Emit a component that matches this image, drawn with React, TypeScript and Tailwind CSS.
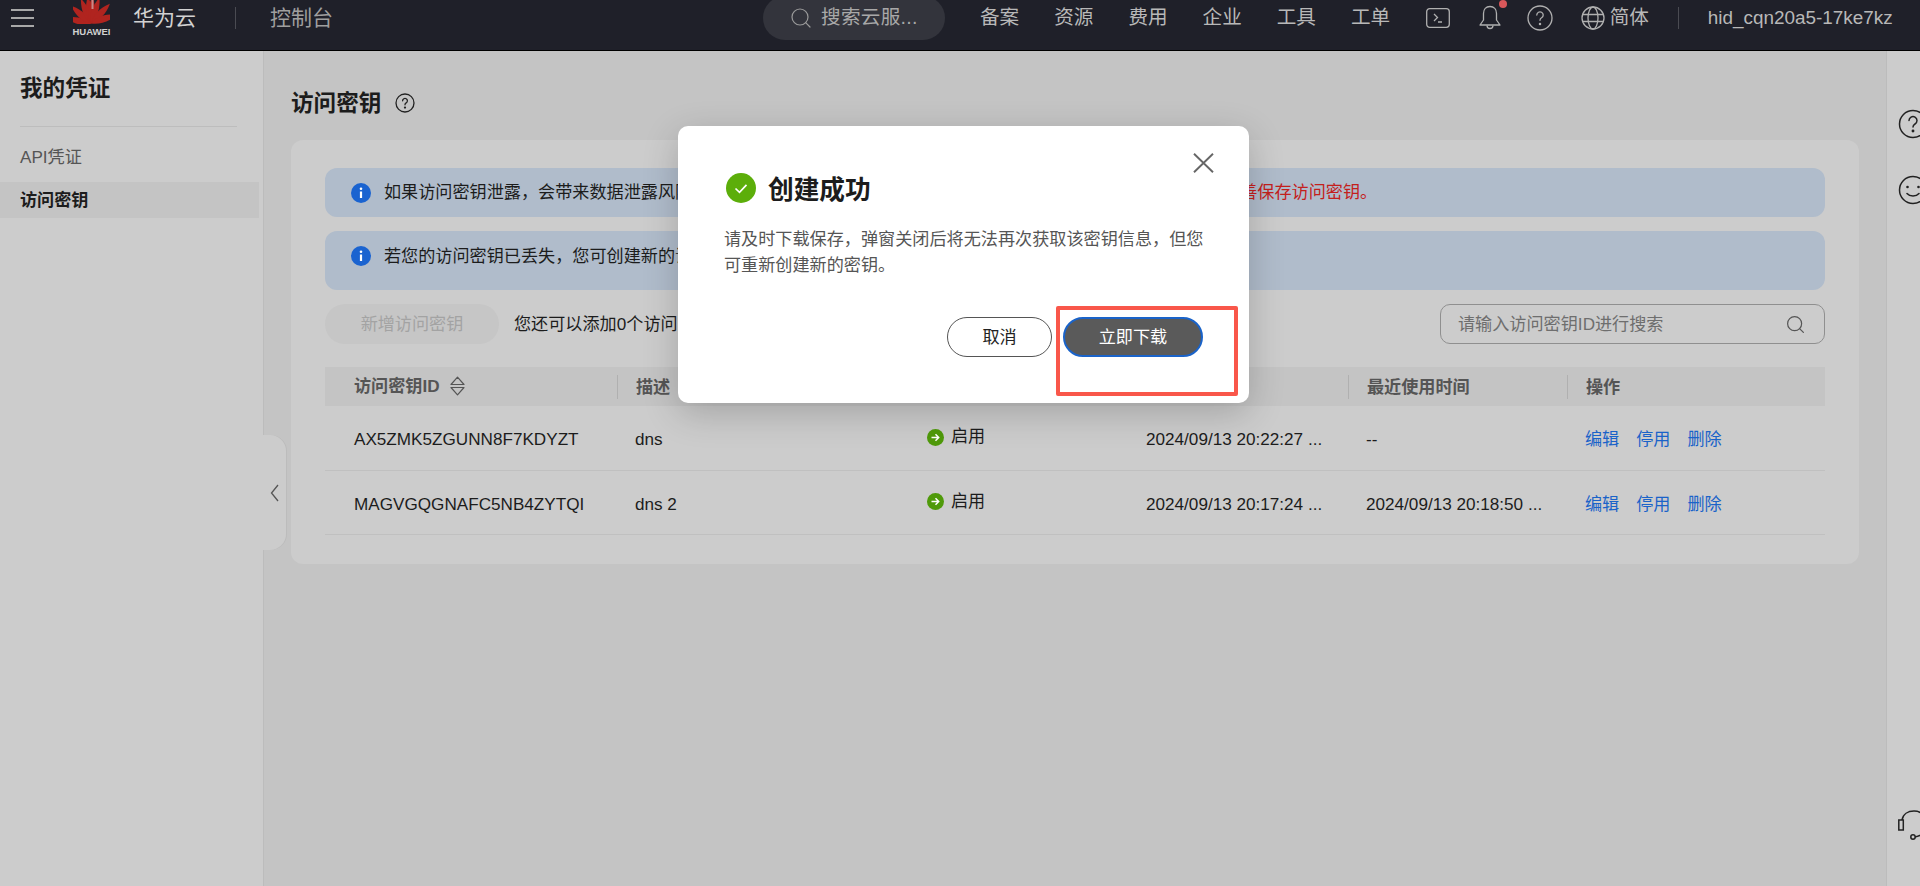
import { Search } from "lucide-react"

const rows = [
  { id: "AX5ZMK5ZGUNN8F7KDYZT", desc: "dns", created: "2024/09/13 20:22:27 ...", used: "--" },
  { id: "MAGVGQGNAFC5NB4ZYTQI", desc: "dns 2", created: "2024/09/13 20:17:24 ...", used: "2024/09/13 20:18:50 ..." },
]

const navItems = ["备案", "资源", "费用", "企业", "工具", "工单"]
const gridCols = "grid grid-cols-[292px_292px_219px_220px_219px_259px]"

export default function App() {
  return (
    <div className="relative flex h-[886px] w-[1920px] flex-col overflow-hidden bg-[#c4c4c4] font-['Liberation_Sans','Noto_Sans_CJK_SC',sans-serif]">
      <TopBar />

      <div className="flex flex-1">
        <aside className="w-[263px] shrink-0 bg-[#cccccc] pr-[4px] shadow-[1px_0_0_#bcbcbc]">
          <h2 className="mt-[20px] ml-[20px] h-[34px] pt-[1px] text-[22.6px] leading-[34px] font-semibold text-[#1c1c1c]">我的凭证</h2>
          <div className="mt-[21px] ml-[20px] w-[217px] border-t border-[#bdbdbd]" />
          <div className="mt-[11px] flex h-[36px] items-center pt-[3px] pl-[20px] text-[17.14px] text-[#555]">API凭证</div>
          <div className="mt-[8px] flex h-[36px] items-center bg-[#c4c4c4] pt-[1px] pl-[20px] text-[17.14px] font-semibold text-[#1c1c1c]">访问密钥</div>
        </aside>

        <main className="min-w-0 flex-1 pr-[28px] pl-[28px]">
          <div className="mt-[35px] mb-[20px] flex h-[34px] items-center gap-[14px]">
            <h1 className="pt-[1px] text-[22.6px] leading-[34px] font-semibold text-[#1c1c1c]">访问密钥</h1>
            <svg className="h-[20px] w-[20px]" viewBox="0 0 20 20" fill="none" stroke="#222" strokeWidth="1.3">
              <circle cx="10" cy="10" r="9" />
              <path d="M7.6 7.8a2.4 2.4 0 1 1 3.6 2.1c-.8.5-1.2 1-1.2 1.9" strokeLinecap="round" />
              <circle cx="10" cy="14.6" r=".5" fill="#222" />
            </svg>
          </div>

          <section className="rounded-[12px] bg-[#cccccc] px-[34px] pt-[28px] pb-[29px]">
            <div className="flex h-[49px] items-center rounded-[12px] bg-[#b0bccb] pl-[26px]">
              <InfoIcon />
              <p className="ml-[13px] pt-[1px] text-[17.14px] whitespace-nowrap text-[#1c1c1c]">
                如果访问密钥泄露，会带来数据泄露风险，且每个访问密钥仅能下载一次，为了账号安全性，
                <span className="text-[#c4201c]">建议您定期更换并妥善保存访问密钥。</span>
              </p>
            </div>
            <div className="mt-[14px] flex h-[59px] items-start rounded-[12px] bg-[#b0bccb] pt-[15px] pl-[26px]">
              <InfoIcon />
              <p className="ml-[13px] text-[17.14px] leading-[20px] whitespace-nowrap text-[#1c1c1c]">若您的访问密钥已丢失，您可创建新的访问密钥，并停用旧的访问密钥。</p>
            </div>

            <div className="mt-[14px] flex h-[40px] items-center">
              <button type="button" className="h-[40px] w-[174px] rounded-full bg-[#c6c6c6] pt-[1px] text-[17.14px] text-[#a3a3a3]">新增访问密钥</button>
              <span className="ml-[15px] pt-[1px] text-[17.14px] text-[#1c1c1c]">您还可以添加0个访问密钥。</span>
              <div className="ml-auto flex h-[40px] w-[385px] items-center justify-between rounded-[10px] border-[1.5px] border-[#8f8f8f] pr-[18px] pl-[17px]">
                <span className="pt-[1px] text-[17.14px] text-[#6e6e6e]">请输入访问密钥ID进行搜索</span>
                <Search className="h-[21px] w-[21px] text-[#555]" strokeWidth={1.4} />
              </div>
            </div>

            <div className={`${gridCols} mt-[23px] h-[39px] items-center bg-[#c4c4c4] text-[17.14px] font-semibold text-[#555]`}>
              <div className="flex items-center pl-[29px]">
                访问密钥ID
                <svg className="ml-[10px] h-[20px] w-[15px]" viewBox="0 0 15 20" fill="none" stroke="#555" strokeWidth="1.2">
                  <path d="M7.5 1.2 14 8.500H1zM1 11.500h13L7.500 18.800z" strokeLinejoin="round" />
                </svg>
              </div>
              <HeadCell>描述</HeadCell>
              <HeadCell>状态</HeadCell>
              <HeadCell>创建时间</HeadCell>
              <HeadCell>最近使用时间</HeadCell>
              <HeadCell>操作</HeadCell>
            </div>

            {rows.map((row) => (
              <div key={row.id} className={`${gridCols} h-[64.5px] items-center border-b-[1.5px] border-[#c0c0c0] pt-[5px] text-[17.14px] text-[#1c1c1c]`}>
                <div className="pl-[29px]">{row.id}</div>
                <div className="pl-[18px]">{row.desc}</div>
                <div className="flex items-center gap-[7px] pb-[6px] pl-[18px]">
                  <StatusIcon />
                  启用
                </div>
                <div className="pl-[18px]">{row.created}</div>
                <div className="pl-[18px]">{row.used}</div>
                <div className="flex gap-[17px] pl-[18px] text-[#1a63c9]">
                  <span>编辑</span>
                  <span>停用</span>
                  <span>删除</span>
                </div>
              </div>
            ))}
          </section>
        </main>

        <aside className="w-[33px] shrink-0 overflow-hidden bg-[#cccccc] pl-[11px] shadow-[-1px_0_0_#bcbcbc]">
          <RailIcons />
        </aside>
      </div>

      <div className="absolute top-[435px] left-[263px] flex h-[115px] w-[23px] items-center rounded-r-[16px] bg-[#cccccc] pl-[7px] shadow-[1px_0_0_#bcbcbc]">
        <svg className="h-[18px] w-[9px]" viewBox="0 0 9 18" fill="none" stroke="#555" strokeWidth="1.3">
          <path d="M8 1 1.500 9 8 17" />
        </svg>
      </div>

      <SuccessModal />
    </div>
  )
}

function TopBar() {
  return (
    <header className="flex h-[51px] shrink-0 items-center border-b border-black bg-[#1f2029] pb-[15px] text-[#b8b8b8]">
      <svg className="ml-[11px] h-[20px] w-[23px]" viewBox="0 0 23 20" stroke="#a8a8a8" strokeWidth="2.2">
        <path d="M0 2h23M0 10h23M0 18h23" />
      </svg>
      <HuaweiLogo />
      <span className="ml-[23px] text-[21px] text-[#d2d2d2]">华为云</span>
      <div className="ml-[39px] h-[22px] w-px bg-[#4a4b52]" />
      <span className="ml-[34px] text-[21px] text-[#9f9f9f]">控制台</span>

      <div className="ml-[430px] flex h-[44px] w-[182px] items-center rounded-full bg-[#33343c] pl-[26px]">
        <Search className="h-[24px] w-[24px] text-[#9a9a9a]" strokeWidth={1.2} />
        <span className="ml-[8px] pt-[1px] text-[19.6px] tracking-[0.3px] whitespace-nowrap text-[#a8a8a8]">搜索云服...</span>
      </div>

      <nav className="ml-[35px] flex gap-[35px] pt-[1px] text-[19.6px]">
        {navItems.map((item) => (
          <span key={item}>{item}</span>
        ))}
      </nav>

      <svg className="ml-[35.5px] h-[20px] w-[24px]" viewBox="0 0 24 20" fill="none" stroke="#b0b0b0" strokeWidth="1.3">
        <rect x=".7" y=".7" width="22.6" height="18.6" rx="3" />
        <path d="m8 6 3.5 3.5L8 13M12 14h4" />
      </svg>
      <div className="relative ml-[28px] h-[26px] w-[24px]">
        <svg className="h-[26px] w-[24px]" viewBox="0 0 24 26" fill="none" stroke="#b0b0b0" strokeWidth="1.3">
          <path d="M12 1.500c-4 0-6.500 3-6.500 7V15L2 20h20l-3.500-5V8.500c0-4-2.500-7-6.500-7Z" strokeLinejoin="round" />
          <path d="M9 20.500a3 3 0 0 0 6 0" />
        </svg>
        <span className="absolute -top-[5px] -right-[5px] h-[8px] w-[8px] rounded-full bg-[#d9575a]" />
      </div>
      <svg className="ml-[25px] h-[26px] w-[26px]" viewBox="0 0 26 26" fill="none" stroke="#b0b0b0" strokeWidth="1.3">
        <circle cx="13" cy="13" r="12" />
        <path d="M9.800 10a3.200 3.200 0 1 1 4.800 2.800c-1 .6-1.600 1.300-1.600 2.500" strokeLinecap="round" />
        <circle cx="13" cy="19" r=".6" fill="#b0b0b0" />
      </svg>
      <svg className="ml-[28px] h-[24px] w-[24px]" viewBox="0 0 24 24" fill="none" stroke="#b0b0b0" strokeWidth="1.3">
        <circle cx="12" cy="12" r="11" />
        <ellipse cx="12" cy="12" rx="5" ry="11" />
        <path d="M1.500 8.500h21M1.500 15.500h21" />
      </svg>
      <span className="ml-[5px] pt-[1px] text-[19.6px]">简体</span>
      <div className="ml-[29px] h-[22px] w-px bg-[#4a4b52]" />
      <span className="ml-[29px] pt-[1px] text-[18.9px] whitespace-nowrap">hid_cqn20a5-17ke7kz</span>
    </header>
  )
}

function HuaweiLogo() {
  const angles = [-74, -46, -20, -5, 5, 20, 46, 74]
  return (
    <div className="ml-[39px] flex w-[37px] flex-col items-center">
      <svg className="h-[25px] w-[37px]" viewBox="0 0 37 25">
        {angles.map((angle) => (
          <path key={angle} d="M0 0C-5.500-7-5.500-16-1.500-27 3-18 3.500-8 0 0Z" fill="#b0241f" transform={`translate(18.500 24.500) rotate(${angle})`} />
        ))}
        <path d="M18.500 0h2v10h-2z" fill="#c98a88" />
      </svg>
      <span className="mt-[3px] text-[9.500px] leading-[10px] font-bold whitespace-nowrap text-[#d0d0d0]">HUAWEI</span>
    </div>
  )
}

function RailIcons() {
  return (
    <div className="flex h-full w-[30px] flex-col">
      <svg className="mt-[58px] h-[30px] w-[30px] shrink-0" viewBox="0 0 30 30" fill="none" stroke="#222" strokeWidth="1.5">
        <circle cx="15" cy="15" r="13.500" />
        <path d="M11 11.500a4 4 0 1 1 6 3.500c-1.300.8-2 1.600-2 3" strokeLinecap="round" />
        <circle cx="15" cy="22" r=".7" fill="#222" />
      </svg>
      <svg className="mt-[36px] h-[30px] w-[30px] shrink-0" viewBox="0 0 30 30" fill="none" stroke="#222" strokeWidth="1.5">
        <circle cx="15" cy="15" r="13.500" />
        <circle cx="9.500" cy="12" r="1.300" fill="#222" stroke="none" />
        <circle cx="20.500" cy="12" r="1.300" fill="#222" stroke="none" />
        <path d="M9 18.500c3 3.400 9 3.400 12 0" strokeLinecap="round" />
      </svg>
      <svg className="mt-[605px] h-[30px] w-[30px] shrink-0" viewBox="0 0 30 30" fill="none" stroke="#222" strokeWidth="1.5">
        <path d="M4 10C5 4 10 1 16 1s10 3 11 9" />
        <rect x=".800" y="10" width="4.500" height="10" />
        <path d="M28 20c-2 4-6 6-11 7" />
        <circle cx="15" cy="27" r="2.200" />
      </svg>
    </div>
  )
}

function SuccessModal() {
  return (
    <div className="absolute top-[126px] left-[678px] h-[277px] w-[571px] rounded-[10px] bg-white pt-[47px] pr-[46px] pl-[46px] shadow-[0_10px_36px_rgba(0,0,0,0.2)]">
      <button type="button" aria-label="关闭" className="absolute top-[27px] right-[35px]">
        <svg className="h-[20px] w-[21px]" viewBox="0 0 21 20" fill="none" stroke="#666" strokeWidth="1.9">
          <path d="m1 .7 19 18.600M20 .7 1 19.300" />
        </svg>
      </button>
      <div className="flex h-[30px] items-center">
        <svg className="ml-[2px] h-[30px] w-[30px]" viewBox="0 0 30 30">
          <circle cx="15" cy="15" r="15" fill="#5cae0a" />
          <path d="m9.500 15.500 4 3.800 7-7.500" fill="none" stroke="#fff" strokeWidth="1.700" />
        </svg>
        <h3 className="ml-[12px] pt-[5px] text-[25.7px] font-semibold text-[#1c1c1c]">创建成功</h3>
      </div>
      <p className="mt-[24px] w-[480px] text-[17.14px] leading-[25.5px] text-[#555]">
        请及时下载保存，弹窗关闭后将无法再次获取该密钥信息，但您可重新创建新的密钥。
      </p>
      <div className="mt-[39px] flex justify-end gap-[11px]">
        <button type="button" className="h-[40px] w-[105px] rounded-full border-[1.5px] border-[#555] pt-[2px] text-[17.14px] text-[#222]">取消</button>
        <button type="button" className="h-[40px] w-[140px] rounded-full border-[2.500px] border-[#1a63c9] bg-[#5a5a5a] pt-[1px] text-[17.14px] text-white">立即下载</button>
      </div>
      <div className="absolute top-[180px] left-[378px] h-[90px] w-[182px] rounded-[2px] border-[4px] border-[#f9574a]" />
    </div>
  )
}

function HeadCell({ children }: { children: React.ReactNode }) {
  return <div className="h-[24px] border-l border-[#b0b0b0] pl-[18px] leading-[24px]">{children}</div>
}

function InfoIcon() {
  return (
    <svg className="h-[20px] w-[20px] shrink-0" viewBox="0 0 20 20">
      <circle cx="10" cy="10" r="10" fill="#1a63d0" />
      <rect x="8.900" y="8.500" width="2.200" height="6.500" fill="#fff" />
      <circle cx="10" cy="5.800" r="1.300" fill="#fff" />
    </svg>
  )
}

function StatusIcon() {
  return (
    <svg className="h-[17px] w-[17px] shrink-0" viewBox="0 0 17 17">
      <circle cx="8.500" cy="8.500" r="8.500" fill="#4f9a0a" />
      <path d="M4.500 8.500h7M8.500 5.300l3.200 3.200-3.200 3.200" fill="none" stroke="#fff" strokeWidth="1.500" />
    </svg>
  )
}
